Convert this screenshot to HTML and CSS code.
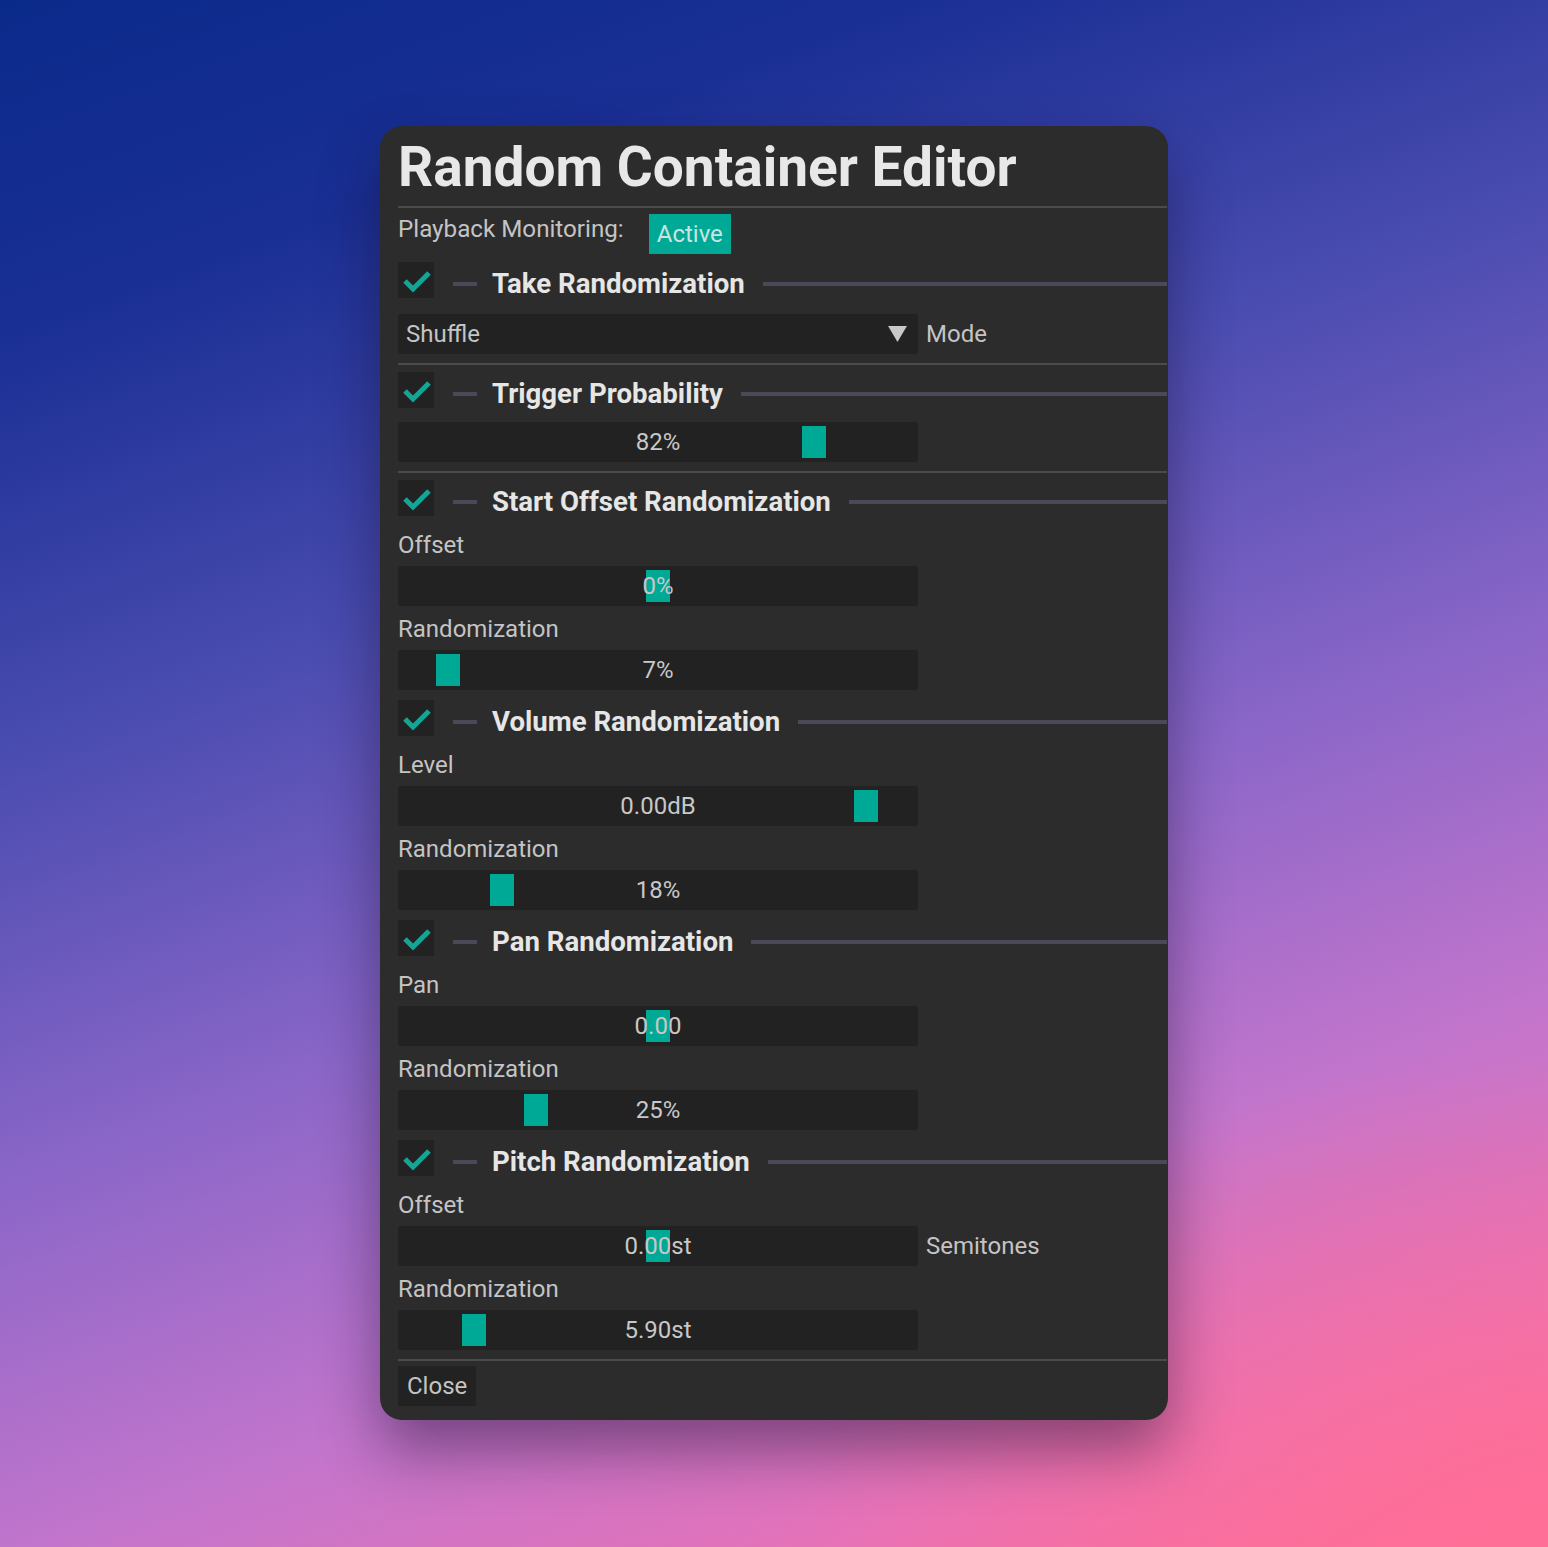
FILE: index.html
```html
<!DOCTYPE html>
<html lang="en">
  <head>
    <meta charset="utf-8" />
    <title>Random Container Editor</title>
    <link rel="stylesheet" href="styles.css">
  </head>
  <body>
    <div class="window">
      <h1 class="title">Random Container Editor</h1>
      <div class="sep"></div>

      <div class="monitor">
        <span class="text">Playback Monitoring:</span>
        <span class="badge">Active</span>
      </div>

      <!-- take randomization -->
      <div class="head">
        <span class="check"><svg viewBox="0 0 36 36"><polyline points="7,19 15,27 31,11" /></svg></span>
        <span class="dash"></span>
        <h2>Take Randomization</h2>
        <span class="rule"></span>
      </div>
      <div class="row head-gap-combo">
        <div class="combo">
          <span>Shuffle</span>
          <svg class="arrow" viewBox="0 0 20 18"><polygon points="0,0 20,0 10,17" /></svg>
        </div>
        <span class="side">Mode</span>
      </div>
      <div class="sep"></div>

      <!-- trigger probability -->
      <div class="head">
        <span class="check"><svg viewBox="0 0 36 36"><polyline points="7,19 15,27 31,11" /></svg></span>
        <span class="dash"></span>
        <h2>Trigger Probability</h2>
        <span class="rule"></span>
      </div>
      <div class="row">
        <div class="slider"><i class="grab" style="left: 404px"></i><span>82%</span></div>
      </div>
      <div class="sep"></div>

      <!-- start offset -->
      <div class="head">
        <span class="check"><svg viewBox="0 0 36 36"><polyline points="7,19 15,27 31,11" /></svg></span>
        <span class="dash"></span>
        <h2>Start Offset Randomization</h2>
        <span class="rule"></span>
      </div>
      <div class="label">Offset</div>
      <div class="row">
        <div class="slider"><i class="grab" style="left: 248px"></i><span>0%</span></div>
      </div>
      <div class="label">Randomization</div>
      <div class="row">
        <div class="slider"><i class="grab" style="left: 38px"></i><span>7%</span></div>
      </div>

      <!-- volume -->
      <div class="head">
        <span class="check"><svg viewBox="0 0 36 36"><polyline points="7,19 15,27 31,11" /></svg></span>
        <span class="dash"></span>
        <h2>Volume Randomization</h2>
        <span class="rule"></span>
      </div>
      <div class="label">Level</div>
      <div class="row">
        <div class="slider"><i class="grab" style="left: 456px"></i><span>0.00dB</span></div>
      </div>
      <div class="label">Randomization</div>
      <div class="row">
        <div class="slider"><i class="grab" style="left: 92px"></i><span>18%</span></div>
      </div>

      <!-- pan -->
      <div class="head">
        <span class="check"><svg viewBox="0 0 36 36"><polyline points="7,19 15,27 31,11" /></svg></span>
        <span class="dash"></span>
        <h2>Pan Randomization</h2>
        <span class="rule"></span>
      </div>
      <div class="label">Pan</div>
      <div class="row">
        <div class="slider"><i class="grab" style="left: 248px"></i><span>0.00</span></div>
      </div>
      <div class="label">Randomization</div>
      <div class="row">
        <div class="slider"><i class="grab" style="left: 126px"></i><span>25%</span></div>
      </div>

      <!-- pitch -->
      <div class="head">
        <span class="check"><svg viewBox="0 0 36 36"><polyline points="7,19 15,27 31,11" /></svg></span>
        <span class="dash"></span>
        <h2>Pitch Randomization</h2>
        <span class="rule"></span>
      </div>
      <div class="label">Offset</div>
      <div class="row">
        <div class="slider"><i class="grab" style="left: 248px"></i><span>0.00st</span></div>
        <span class="side">Semitones</span>
      </div>
      <div class="label">Randomization</div>
      <div class="row">
        <div class="slider"><i class="grab" style="left: 64px"></i><span>5.90st</span></div>
      </div>
      <div class="sep"></div>

      <div class="footer">
        <span class="button">Close</span>
      </div>
    </div>
  </body>
</html>
```

FILE: styles.css
```css
html {
  background-color: #2a2a8a;
}

body {
  margin: 0;
  min-height: 1547px;
  padding-top: 126px;
  box-sizing: border-box;
  display: flex;
  justify-content: center;
  align-items: flex-start;
  font-family: Roboto, "Liberation Sans", sans-serif;
  background:
    radial-gradient(ellipse 70% 45% at 100% 100%, rgba(255, 110, 150, 0.9), rgba(255, 110, 150, 0) 70%),
    linear-gradient(160deg, #0a2a8a 0%, #1a2f94 16%, #4a4cb0 36%, #8a66c8 56%, #c275cc 74%, #e672b8 88%, #ff6c96 100%);
}

.window {
  width: 788px;
  box-sizing: border-box;
  padding: 14px 1px 14px 18px;
  background-color: #2c2c2c;
  border-radius: 22px;
  box-shadow: 0 30px 60px rgba(20, 10, 40, 0.45);
  display: flex;
  flex-direction: column;
  color: #c4c4c4;
  font-size: 24px;
  line-height: 24px;
}

.title {
  margin: 0;
  font-size: 55px;
  line-height: 54px;
  font-weight: 700;
  color: #e8e8e8;
}

.sep {
  height: 2px;
  margin-top: 9px;
  background-color: #4b4b4b;
}
.title + .sep {
  margin-top: 12px;
}

.monitor {
  margin-top: 6px;
  display: flex;
  align-items: flex-start;
  gap: 25px;
}
.monitor .text {
  padding-top: 3px;
  font-size: 24.2px;
}

.badge {
  height: 40px;
  padding: 0 8px;
  line-height: 40px;
  background-color: #00a896;
  color: #c9e4e0;
}

/* section header: checkbox, short dash, title, trailing rule */
.head {
  margin-top: 10px;
  height: 36px;
  display: flex;
  align-items: center;
}
.sep + .head {
  margin-top: 7px;
}
.monitor + .head {
  margin-top: 8px;
}

.check {
  width: 36px;
  height: 36px;
  flex: none;
  background-color: #222222;
}
.check svg {
  display: block;
  width: 36px;
  height: 36px;
}
.check polyline {
  fill: none;
  stroke: #14a596;
  stroke-width: 5;
}

.dash {
  width: 24px;
  height: 4px;
  margin: 8px 0 0 19px;
  background-color: #4a4958;
  flex: none;
}

.head h2 {
  margin: 7px 0 0 15px;
  font-size: 27.6px;
  line-height: 36px;
  font-weight: 700;
  color: #e6e6e6;
  white-space: nowrap;
}

.rule {
  flex: 1;
  height: 4px;
  margin: 8px 0 0 18px;
  background-color: #4a4958;
}

.label {
  margin-top: 11px;
}
.head + .label {
  margin-top: 17px;
}

.row {
  margin-top: 10px;
  display: flex;
  align-items: center;
  gap: 8px;
}
.head + .row {
  margin-top: 14px;
}
.label + .row {
  margin-top: 9px;
}
.head + .head-gap-combo {
  margin-top: 16px;
}

.combo {
  width: 520px;
  height: 40px;
  box-sizing: border-box;
  padding: 0 11px 0 8px;
  display: flex;
  align-items: center;
  justify-content: space-between;
  background-color: #222222;
  border-radius: 3px;
}
.arrow {
  width: 19px;
  height: 17px;
}
.arrow polygon {
  fill: #c8c8c8;
}

.slider {
  position: relative;
  width: 520px;
  height: 40px;
  background-color: #222222;
  border-radius: 3px;
  display: flex;
  align-items: center;
  justify-content: center;
  color: #c8c8c8;
}
.slider span {
  position: relative;
}
.grab {
  position: absolute;
  top: 4px;
  width: 24px;
  height: 32px;
  background-color: #00a896;
}

.footer {
  margin-top: 5px;
  display: flex;
}
.button {
  height: 40px;
  padding: 0 9px;
  line-height: 40px;
  background-color: #222222;
}
```
